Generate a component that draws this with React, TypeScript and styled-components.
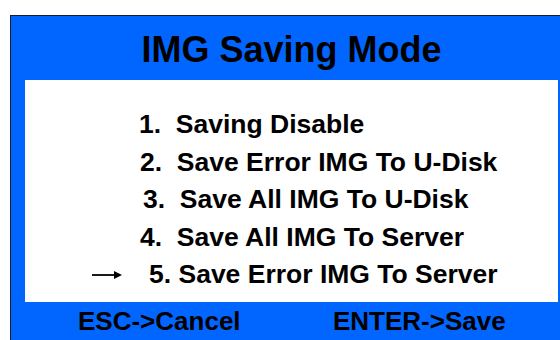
import { createGlobalStyle, styled } from 'styled-components';

const GlobalStyle = createGlobalStyle`
    html, body {
        margin: 0;
        padding: 0;
        background: #ffffff;
        overflow: hidden;
    }
    body {
        font-family: 'Liberation Sans', Arial, sans-serif;
    }
`;

const items = [
    { label: '1.  Saving Disable', shift: 0 },
    { label: '2.  Save Error IMG To U-Disk', shift: 1 },
    { label: '3.  Save All IMG To U-Disk', shift: 4 },
    { label: '4.  Save All IMG To Server', shift: 1 },
    { label: '5. Save Error IMG To Server', shift: 10, selected: true },
];

const App = () => {
    return (
        <>
            <GlobalStyle />
            <Page>
                <Panel>
                    <Title>IMG Saving Mode</Title>
                    <MenuBox>
                        {items.map((item) => (
                            <Row key={item.label}>
                                <Marker>
                                    {item.selected && (
                                        <svg width="31" height="12" viewBox="0 0 31 12">
                                            <path d="M0 6 H28" stroke="#000" strokeWidth="1.8" />
                                            <path d="M22 2 L30 6 L22 10 Z" fill="#000" />
                                        </svg>
                                    )}
                                </Marker>
                                <Label $shift={item.shift}>{item.label}</Label>
                            </Row>
                        ))}
                    </MenuBox>
                    <Footer>
                        <Hint>ESC-&gt;Cancel</Hint>
                        <Hint>ENTER-&gt;Save</Hint>
                    </Footer>
                </Panel>
            </Page>
        </>
    );
};

const Page = styled.div`
    width: 560px;
    height: 340px;
    overflow: hidden;
    padding: 15px 0 0 10px;
    box-sizing: border-box;
`;

const Panel = styled.div`
    width: 562px;
    height: 330px;
    box-sizing: border-box;
    background: #0066ff;
    border-left: 1px solid #1c1c28;
    border-top: 1px solid #1c1c28;
    padding: 0 14px;
    display: flex;
    flex-direction: column;
`;

const Title = styled.h1`
    margin: 0;
    height: 64px;
    display: flex;
    align-items: center;
    justify-content: center;
    font-size: 36px;
    font-weight: 700;
    color: #000;
    padding-top: 3px;
    box-sizing: border-box;
`;

const MenuBox = styled.div`
    background: #ffffff;
    height: 222px;
    display: flex;
    flex-direction: column;
    padding: 29px 0 0 67px;
    box-sizing: border-box;
    gap: 6.5px;
`;

const Row = styled.div`
    display: flex;
    align-items: center;
    height: 31px;
`;

const Marker = styled.div`
    width: 47px;
    display: flex;
    align-items: center;
`;

const Label = styled.span<{ $shift: number }>`
    white-space: pre;
    font-size: 26.5px;
    font-weight: 700;
    color: #000;
    margin-left: ${(p) => p.$shift}px;
`;

const Footer = styled.div`
    display: grid;
    grid-template-columns: 255px auto;
    padding-left: 53px;
    height: 38px;
    align-items: center;
`;

const Hint = styled.span`
    font-size: 26px;
    font-weight: 700;
    color: #000;
`;

export default App;
